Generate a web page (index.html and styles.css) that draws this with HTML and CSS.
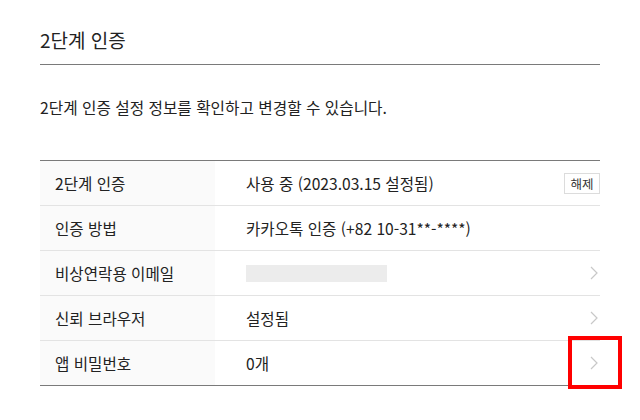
FILE: index.html
```html
<!DOCTYPE html>
<html lang="ko">
<head>
    <meta charset="utf-8">
    <title>2단계 인증</title>
    <link rel="stylesheet" href="styles.css">
</head>
<body>
    <div class="page">
        <h2 class="title">2단계 인증</h2>
        <p class="desc">2단계 인증 설정 정보를 확인하고 변경할 수 있습니다.</p>
        <table class="info">
            <tr>
                <th>2단계 인증</th>
                <td>
                    <div class="cell">
                        <span>사용 중 (2023.03.15 설정됨)</span>
                        <button type="button" class="btn">해제</button>
                    </div>
                </td>
            </tr>
            <tr>
                <th>인증 방법</th>
                <td><div class="cell"><span>카카오톡 인증 (+82 10-31**-****)</span></div></td>
            </tr>
            <tr>
                <th>비상연락용 이메일</th>
                <td>
                    <div class="cell">
                        <span class="blank"></span>
                        <svg class="arrow" width="8" height="14" viewBox="0 0 8 14"><path d="M1 1l6 6-6 6" fill="none" stroke="#c8c8c8" stroke-width="1.2"/></svg>
                    </div>
                </td>
            </tr>
            <tr>
                <th>신뢰 브라우저</th>
                <td>
                    <div class="cell">
                        <span>설정됨</span>
                        <svg class="arrow" width="8" height="14" viewBox="0 0 8 14"><path d="M1 1l6 6-6 6" fill="none" stroke="#c8c8c8" stroke-width="1.2"/></svg>
                    </div>
                </td>
            </tr>
            <tr>
                <th>앱 비밀번호</th>
                <td>
                    <div class="cell">
                        <span>0개</span>
                        <svg class="arrow" width="8" height="14" viewBox="0 0 8 14"><path d="M1 1l6 6-6 6" fill="none" stroke="#c8c8c8" stroke-width="1.2"/></svg>
                    </div>
                </td>
            </tr>
        </table>
    </div>
    <div class="mark"></div>
</body>
</html>
```

FILE: styles.css
```css
body {
    margin: 0;
    background: #fff;
    color: #222;
    font-family: "Noto Sans CJK KR", "Noto Sans", sans-serif;
}

.page {
    padding: 24px 40px 0;
}

.title {
    font-size: 19px;
    font-weight: 400;
    line-height: 32px;
    margin: 0;
    padding-bottom: 8px;
    border-bottom: 1px solid #7a7a7a;
}

.desc {
    font-size: 15.7px;
    line-height: 24px;
    margin: 31px 0 0;
}

.info {
    width: 100%;
    margin-top: 40px;
    border-collapse: collapse;
    border-top: 1px solid #7a7a7a;
    border-bottom: 1px solid #7a7a7a;
    font-size: 15.6px;
}

.info tr + tr {
    border-top: 1px solid #e3e3e3;
}

.info th {
    width: 160px;
    height: 44px;
    padding: 0 0 0 15px;
    background: #fafafa;
    font-weight: 400;
    text-align: left;
}

.info td {
    padding: 0 0 0 31px;
}

.cell {
    display: flex;
    align-items: center;
    justify-content: space-between;
}

.btn {
    width: 36px;
    height: 21px;
    padding: 0;
    border: 1px solid #dcdcdc;
    background: #fff;
    color: #333;
    font: 12.5px "Noto Sans CJK KR", sans-serif;
}

.blank {
    width: 141px;
    height: 17px;
    background: #ececec;
}

.arrow {
    margin-right: 2px;
}

.mark {
    position: absolute;
    left: 568px;
    top: 336px;
    width: 46px;
    height: 45px;
    border: 4px solid #ff0000;
}
```
